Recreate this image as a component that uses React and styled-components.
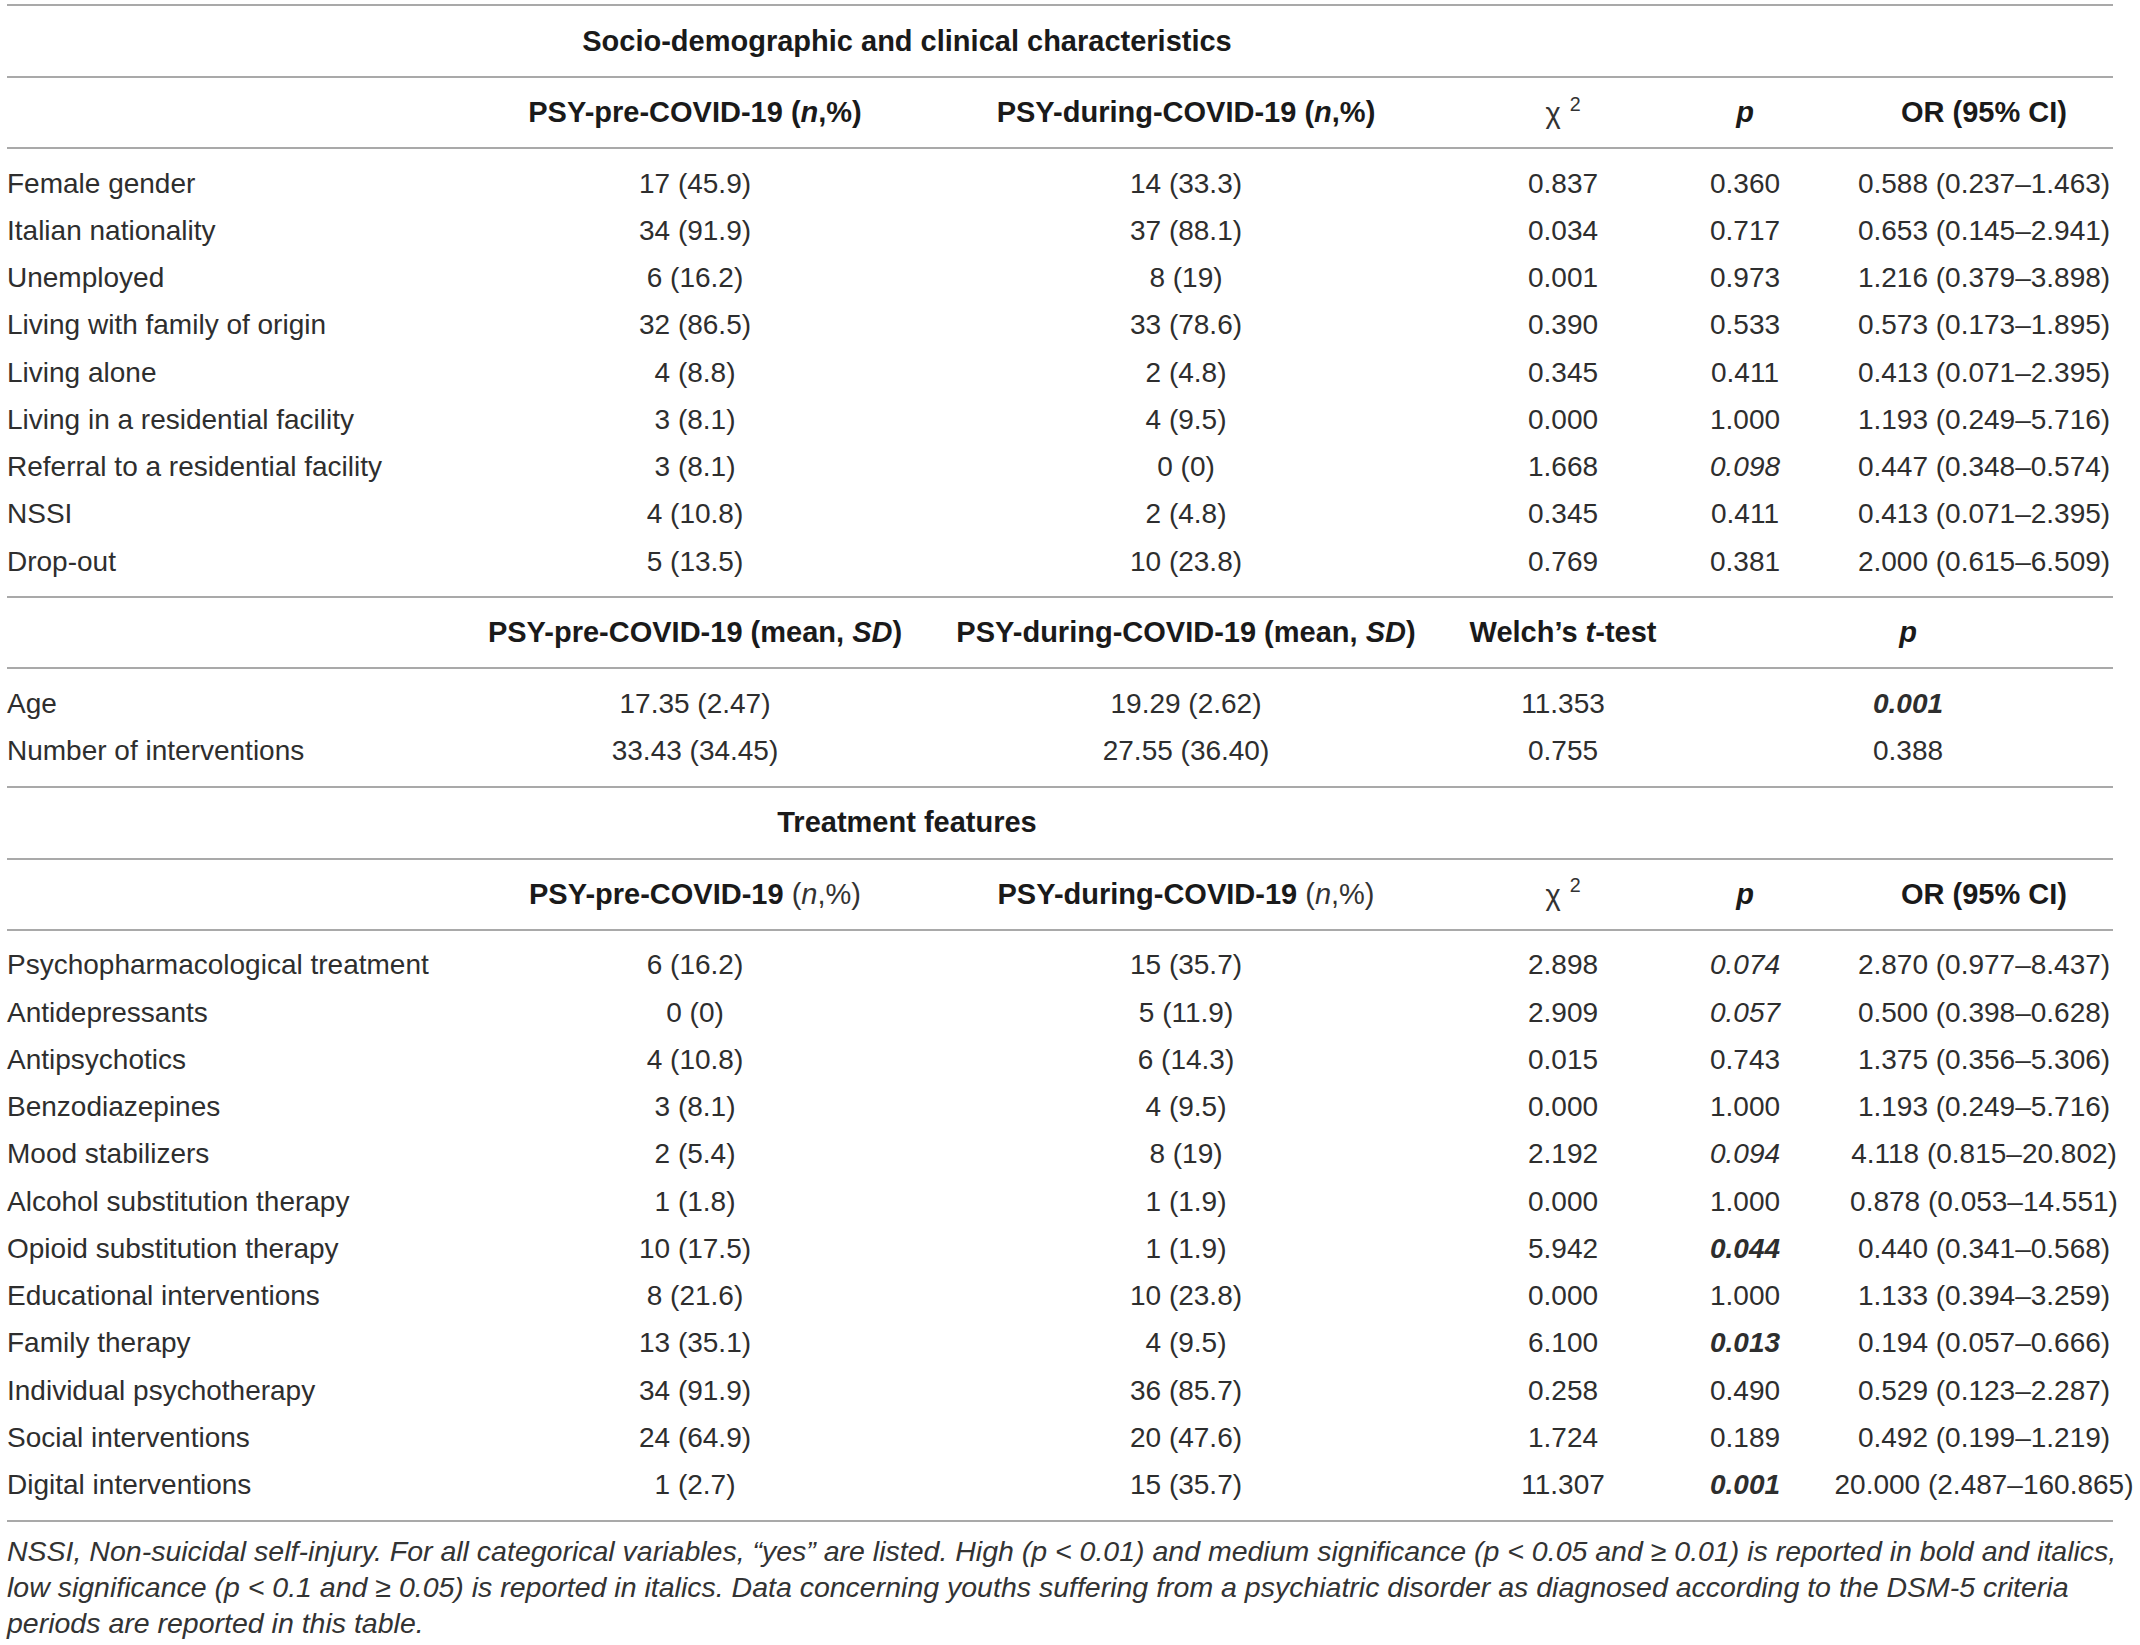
import React from 'react'
import styled, {createGlobalStyle} from 'styled-components'

const GlobalStyles = createGlobalStyle`
	body {
		margin: 0;
		background: #fff;
		font-family: "Liberation Sans", Arial, sans-serif;
		color: #2e2e2e;
	}
`

const CATEGORY_COLS = '502px 372px 610px 144px 220px 258px'
const MEAN_COLS = '502px 372px 610px 144px 68px 410px'

const Page = styled.div`
	width: 2106px;
	padding: 4px 0 0 7px;
`

const Rule = styled.div`
	height: 2px;
	background: #a9a9a9;
`

const TitleRow = styled.div`
	display: flex;
	align-items: center;
	justify-content: center;
	width: 1848px;
	height: 70px;
	padding-right: 48px;
	box-sizing: border-box;
	font-size: 29px;
	font-weight: bold;
	color: #1a1a1a;
	white-space: nowrap;
`

const HeadRow = styled.div`
	display: grid;
	grid-template-columns: ${p => p.$cols};
	height: 69px;
	align-items: center;
	font-size: 29px;
	font-weight: bold;
	color: #1a1a1a;
`

const Body = styled.div`
	padding: 11px 0;
`

const DataRow = styled.div`
	display: grid;
	grid-template-columns: ${p => p.$cols};
	height: 47.25px;
	align-items: center;
	font-size: 28px;
`

const Cell = styled.div`
	display: flex;
	justify-content: ${p => (p.$left ? 'flex-start' : 'center')};
	grid-column: ${p => p.$col || 'auto'};
	white-space: pre;
	font-style: ${p => (p.$sig ? 'italic' : 'normal')};
	font-weight: ${p => (p.$sig === 'high' ? 'bold' : 'inherit')};
`

const Light = styled.span`
	font-weight: normal;
	color: #333;
`

const Sup = styled.sup`
	font-size: 0.68em;
	font-weight: normal;
	margin-left: 9px;
	position: relative;
	top: -2px;
`

const Footnote = styled.div`
	padding-top: 11px;
	font-size: 28.5px;
	line-height: 36px;
	font-style: italic;
	color: #333;
	white-space: nowrap;
`

const demographics = [
	['Female gender', '17 (45.9)', '14 (33.3)', '0.837', '0.360', '0.588 (0.237–1.463)'],
	['Italian nationality', '34 (91.9)', '37 (88.1)', '0.034', '0.717', '0.653 (0.145–2.941)'],
	['Unemployed', '6 (16.2)', '8 (19)', '0.001', '0.973', '1.216 (0.379–3.898)'],
	['Living with family of origin', '32 (86.5)', '33 (78.6)', '0.390', '0.533', '0.573 (0.173–1.895)'],
	['Living alone', '4 (8.8)', '2 (4.8)', '0.345', '0.411', '0.413 (0.071–2.395)'],
	['Living in a residential facility', '3 (8.1)', '4 (9.5)', '0.000', '1.000', '1.193 (0.249–5.716)'],
	['Referral to a residential facility', '3 (8.1)', '0 (0)', '1.668', '0.098', '0.447 (0.348–0.574)', 'low'],
	['NSSI', '4 (10.8)', '2 (4.8)', '0.345', '0.411', '0.413 (0.071–2.395)'],
	['Drop-out', '5 (13.5)', '10 (23.8)', '0.769', '0.381', '2.000 (0.615–6.509)'],
]

const means = [
	['Age', '17.35 (2.47)', '19.29 (2.62)', '11.353', '0.001', 'high'],
	['Number of interventions', '33.43 (34.45)', '27.55 (36.40)', '0.755', '0.388'],
]

const treatments = [
	['Psychopharmacological treatment', '6 (16.2)', '15 (35.7)', '2.898', '0.074', '2.870 (0.977–8.437)', 'low'],
	['Antidepressants', '0 (0)', '5 (11.9)', '2.909', '0.057', '0.500 (0.398–0.628)', 'low'],
	['Antipsychotics', '4 (10.8)', '6 (14.3)', '0.015', '0.743', '1.375 (0.356–5.306)'],
	['Benzodiazepines', '3 (8.1)', '4 (9.5)', '0.000', '1.000', '1.193 (0.249–5.716)'],
	['Mood stabilizers', '2 (5.4)', '8 (19)', '2.192', '0.094', '4.118 (0.815–20.802)', 'low'],
	['Alcohol substitution therapy', '1 (1.8)', '1 (1.9)', '0.000', '1.000', '0.878 (0.053–14.551)'],
	['Opioid substitution therapy', '10 (17.5)', '1 (1.9)', '5.942', '0.044', '0.440 (0.341–0.568)', 'high'],
	['Educational interventions', '8 (21.6)', '10 (23.8)', '0.000', '1.000', '1.133 (0.394–3.259)'],
	['Family therapy', '13 (35.1)', '4 (9.5)', '6.100', '0.013', '0.194 (0.057–0.666)', 'high'],
	['Individual psychotherapy', '34 (91.9)', '36 (85.7)', '0.258', '0.490', '0.529 (0.123–2.287)'],
	['Social interventions', '24 (64.9)', '20 (47.6)', '1.724', '0.189', '0.492 (0.199–1.219)'],
	['Digital interventions', '1 (2.7)', '15 (35.7)', '11.307', '0.001', '20.000 (2.487–160.865)', 'high'],
]

const ChiSquare = () => <span>χ<Sup>2</Sup></span>

function CategoryRows({rows}) {
	return (
		<Body>
			{rows.map(([label, pre, during, chi, p, or, sig]) => (
				<DataRow key={label} $cols={CATEGORY_COLS}>
					<Cell $left>{label}</Cell>
					<Cell>{pre}</Cell>
					<Cell>{during}</Cell>
					<Cell>{chi}</Cell>
					<Cell $sig={sig}>{p}</Cell>
					<Cell>{or}</Cell>
				</DataRow>
			))}
		</Body>
	)
}

export default function App() {
	return (
		<Page>
			<GlobalStyles/>
			<Rule/>
			<TitleRow>Socio-demographic and clinical characteristics</TitleRow>
			<Rule/>
			<HeadRow $cols={CATEGORY_COLS}>
				<Cell/>
				<Cell><span>PSY-pre-COVID-19 (<i>n</i>,%)</span></Cell>
				<Cell><span>PSY-during-COVID-19 (<i>n</i>,%)</span></Cell>
				<Cell><Light><ChiSquare/></Light></Cell>
				<Cell><i>p</i></Cell>
				<Cell>OR (95% CI)</Cell>
			</HeadRow>
			<Rule/>
			<CategoryRows rows={demographics}/>
			<Rule/>
			<HeadRow $cols={MEAN_COLS}>
				<Cell/>
				<Cell><span>PSY-pre-COVID-19 (mean, <i>SD</i>)</span></Cell>
				<Cell><span>PSY-during-COVID-19 (mean, <i>SD</i>)</span></Cell>
				<Cell><span>Welch’s <i>t</i>-test</span></Cell>
				<Cell $col={6}><i>p</i></Cell>
			</HeadRow>
			<Rule/>
			<Body>
				{means.map(([label, pre, during, welch, p, sig]) => (
					<DataRow key={label} $cols={MEAN_COLS}>
						<Cell $left>{label}</Cell>
						<Cell>{pre}</Cell>
						<Cell>{during}</Cell>
						<Cell>{welch}</Cell>
						<Cell $col={6} $sig={sig}>{p}</Cell>
					</DataRow>
				))}
			</Body>
			<Rule/>
			<TitleRow>Treatment features</TitleRow>
			<Rule/>
			<HeadRow $cols={CATEGORY_COLS}>
				<Cell/>
				<Cell><span>PSY-pre-COVID-19 <Light>(<i>n</i>,%)</Light></span></Cell>
				<Cell><span>PSY-during-COVID-19 <Light>(<i>n</i>,%)</Light></span></Cell>
				<Cell><Light><ChiSquare/></Light></Cell>
				<Cell><i>p</i></Cell>
				<Cell>OR (95% CI)</Cell>
			</HeadRow>
			<Rule/>
			<CategoryRows rows={treatments}/>
			<Rule/>
			<Footnote>
				NSSI, Non-suicidal self-injury. For all categorical variables, “yes” are listed. High (p &lt; 0.01) and medium significance (p &lt; 0.05 and ≥ 0.01) is reported in bold and italics,<br/>
				low significance (p &lt; 0.1 and ≥ 0.05) is reported in italics. Data concerning youths suffering from a psychiatric disorder as diagnosed according to the DSM-5 criteria<br/>
				periods are reported in this table.
			</Footnote>
		</Page>
	)
}
